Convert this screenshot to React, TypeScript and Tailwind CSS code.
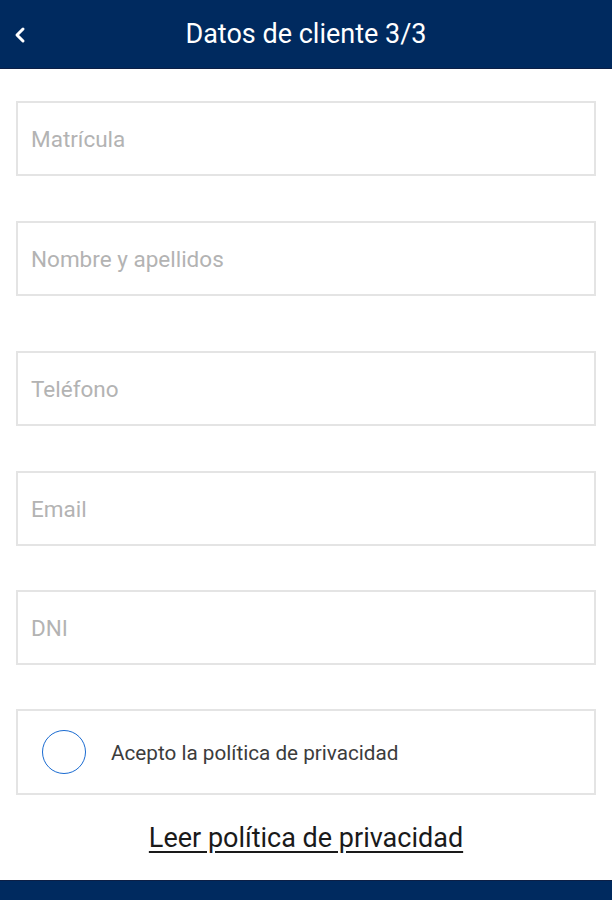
import { ChevronLeft } from "lucide-react";

const fields = [
  { label: "Matrícula", mt: "mt-[32px]" },
  { label: "Nombre y apellidos", mt: "mt-[45px]" },
  { label: "Teléfono", mt: "mt-[55px]" },
  { label: "Email", mt: "mt-[45px]" },
  { label: "DNI", mt: "mt-[44px]" },
];

export default function App() {
  return (
    <div className="flex h-[900px] w-[612px] flex-col overflow-hidden bg-white font-['Roboto',sans-serif]">
      {/* Header */}
      <header className="relative flex h-[69px] shrink-0 items-center justify-center border-b border-[#0d1f45] bg-[#002a5f]">
        <ChevronLeft className="absolute left-[8px] top-[23px] h-[24px] w-[24px] text-white" strokeWidth={3} />
        <h1 className="text-[27px] leading-none text-white">Datos de cliente 3/3</h1>
      </header>

      <main className="flex flex-1 flex-col px-4">
        {fields.map((f) => (
          <div
            key={f.label}
            className={`${f.mt} flex h-[75px] items-center border-2 border-[#e4e4e4] px-[13px]`}
          >
            <span className="pt-[2px] text-[22.5px] text-[#b3b3b3]">{f.label}</span>
          </div>
        ))}

        {/* Privacy checkbox */}
        <div className="mt-[44px] flex h-[86px] items-center border-2 border-[#e4e4e4] pl-[24px]">
          <span className="h-[44px] w-[44px] rounded-full border-[1.5px] border-[#1a6bd1]" />
          <span className="ml-[25px] pt-[4px] text-[20.7px] text-[#3c3c3c]">Acepto la política de privacidad</span>
        </div>

        <a className="mt-[26px] self-center text-[27px] leading-[34px] text-[#1a1a1a] underline underline-offset-[4px]">
          Leer política de privacidad
        </a>
      </main>

      {/* Bottom bar */}
      <div className="h-[20px] shrink-0 border-t border-[#0d1f45] bg-[#002a5f]" />
    </div>
  );
}
